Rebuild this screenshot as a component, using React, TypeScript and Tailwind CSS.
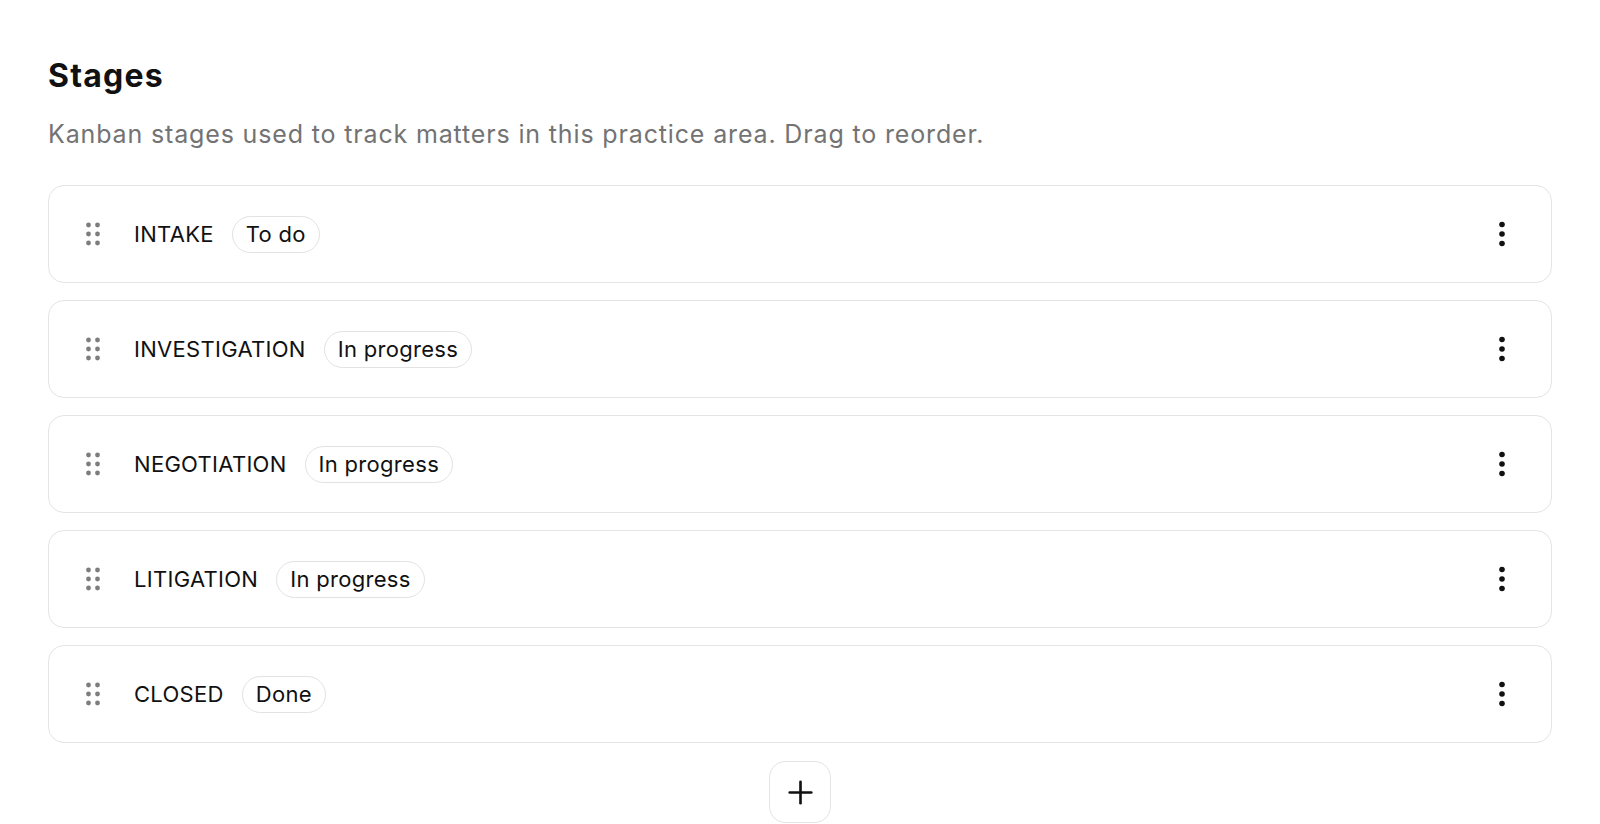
import { Plus } from "lucide-react";

const stages = [
  { name: "INTAKE", status: "To do" },
  { name: "INVESTIGATION", status: "In progress" },
  { name: "NEGOTIATION", status: "In progress" },
  { name: "LITIGATION", status: "In progress" },
  { name: "CLOSED", status: "Done" },
];

const Grip = () => (
  <svg width="14" height="24" viewBox="0 0 14 24" className="shrink-0">
    {[3, 12, 21].map((cy) =>
      [2.5, 11.5].map((cx) => (
        <circle key={`${cx}-${cy}`} cx={cx} cy={cy} r="2.4" fill="#7d7d7d" />
      ))
    )}
  </svg>
);

const Kebab = () => (
  <svg width="8" height="28" viewBox="0 0 8 28">
    <circle cx="4" cy="4.5" r="2.8" fill="#111" />
    <circle cx="4" cy="14" r="2.8" fill="#111" />
    <circle cx="4" cy="23.5" r="2.8" fill="#111" />
  </svg>
);

const App = () => {
  return (
    <div className="min-h-screen bg-white px-[48px] pt-[58px] font-['Inter',sans-serif] text-[#111]">
      <h1 className="text-[32px] font-bold leading-[36px] tracking-[1.2px]">Stages</h1>
      <p className="mt-[24px] text-[25px] leading-[32px] tracking-[0.85px] text-[#737373]">
        Kanban stages used to track matters in this practice area. Drag to reorder.
      </p>

      <div className="mt-[35px] flex flex-col gap-[17px]">
        {stages.map((stage) => (
          <div
            key={stage.name}
            className="flex h-[98px] items-center rounded-[16px] border-[1.5px] border-[#e4e4e4] bg-white pl-[37px] pr-[41px]"
          >
            <Grip />
            <span className="ml-[34px] text-[22px] leading-[30px] tracking-[0.3px]">{stage.name}</span>
            <span className="ml-[18px] rounded-full border-[1.5px] border-[#e2e2e2] px-[13px] text-[22px] leading-[35px] tracking-[0.3px]">
              {stage.status}
            </span>
            <button className="ml-auto flex h-[36px] w-[16px] items-center justify-center">
              <Kebab />
            </button>
          </div>
        ))}
      </div>

      <div className="mt-[18px] flex justify-center">
        <button className="flex h-[62px] w-[62px] items-center justify-center rounded-[16px] border-[1.5px] border-[#e4e4e4] bg-white">
          <Plus className="h-[37px] w-[37px] text-[#111]" strokeWidth={1.7} />
        </button>
      </div>
    </div>
  );
};

export default App;
